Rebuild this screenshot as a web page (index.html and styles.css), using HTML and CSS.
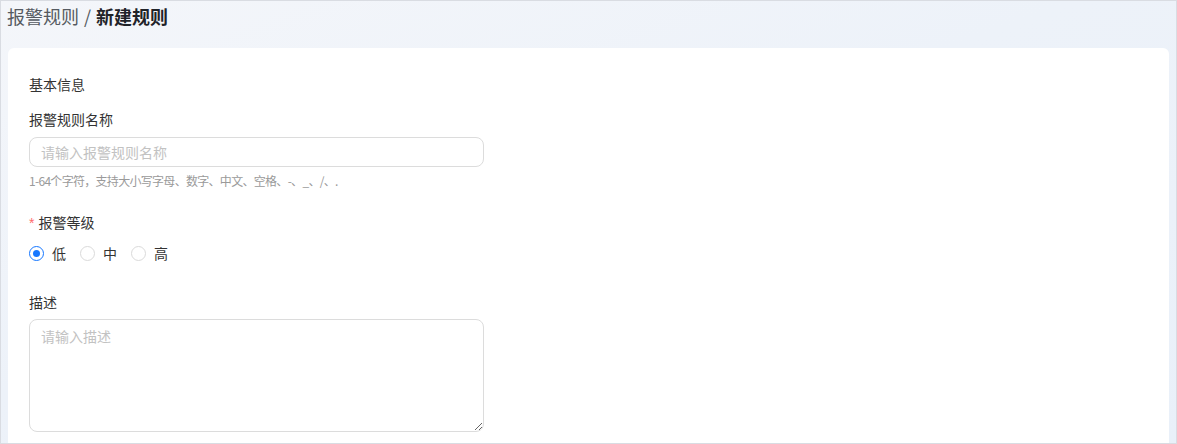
FILE: index.html
```html
<!DOCTYPE html>
<html lang="zh-CN">
<head>
<meta charset="utf-8">
<title>新建规则</title>
<link rel="stylesheet" href="styles.css">
</head>
<body>
<div class="frame">
  <header class="header"><span class="crumb">报警规则</span><span class="sep">/</span><span class="current">新建规则</span></header>
  <main class="card">
    <div class="section-title">基本信息</div>
    <div class="field">
      <label class="label">报警规则名称</label>
      <input class="input" type="text" placeholder="请输入报警规则名称">
      <div class="hint">1-64个字符，支持大小写字母、数字、中文、空格、-、_、/、.</div>
    </div>
    <div class="field field-level">
      <label class="label"><span class="req">*</span>报警等级</label>
      <div class="radios">
        <span class="radio"><span class="dot checked"></span><span class="radio-text">低</span></span>
        <span class="radio"><span class="dot"></span><span class="radio-text">中</span></span>
        <span class="radio"><span class="dot"></span><span class="radio-text">高</span></span>
      </div>
    </div>
    <div class="field field-desc">
      <label class="label">描述</label>
      <textarea class="textarea" placeholder="请输入描述"></textarea>
    </div>
  </main>
</div>
</body>
</html>
```
FILE: styles.css
```css
html, body {
  margin: 0;
  padding: 0;
}
body {
  font-family: "Noto Sans CJK SC", "Noto Sans", "Liberation Sans", sans-serif;
  color: #333;
}
.frame {
  width: 1177px;
  height: 444px;
  box-sizing: border-box;
  border: 1px solid #d9dce2;
  background: linear-gradient(160deg, #f4f6fa 0%, #edf2f9 45%, #e9f0f9 100%);
  overflow: hidden;
  display: flex;
  flex-direction: column;
}
.header {
  height: 47px;
  flex: none;
  padding-left: 6px;
  font-size: 18px;
  line-height: 31px;
  display: flex;
  align-items: flex-start;
}
.crumb, .sep {
  color: #555a61;
}
.sep {
  margin: 0 5px;
}
.current {
  color: #1f2329;
  font-weight: 700;
}
.card {
  flex: 1;
  margin: 0 7px 0 7px;
  background: #fff;
  border-radius: 6px 6px 0 0;
  padding: 25px 21px 0 21px;
}
.section-title {
  font-size: 14px;
  line-height: 22px;
  color: #333;
}
.field {
  display: flex;
  flex-direction: column;
  align-items: flex-start;
  margin-top: 13px;
}
.label {
  font-size: 14px;
  line-height: 22px;
  color: #333;
}
.req {
  color: #ff6b6b;
  margin-right: 4px;
  font-family: "Liberation Sans", sans-serif;
}
.input {
  margin-top: 7px;
  width: 455px;
  height: 30px;
  box-sizing: border-box;
  border: 1px solid #dcdcdc;
  border-radius: 8px;
  padding: 0 11px;
  font-family: inherit;
  font-size: 14px;
  color: #333;
  outline: none;
  background: #fff;
}
.input::placeholder, .textarea::placeholder {
  color: #c2c2c2;
}
.hint {
  margin-top: 4px;
  font-size: 12px;
  line-height: 20px;
  color: #9a9a9a;
  letter-spacing: -0.7px;
}
.field-level {
  margin-top: 20px;
}
.radios {
  display: flex;
  align-items: center;
  margin-top: 8px;
  height: 22px;
}
.radio {
  display: inline-flex;
  align-items: center;
  margin-right: 14px;
}
.dot {
  width: 15px;
  height: 15px;
  box-sizing: border-box;
  border: 1px solid #dadada;
  border-radius: 50%;
  background: #fff;
  position: relative;
}
.dot.checked {
  border-color: #1677ff;
}
.dot.checked::after {
  content: "";
  position: absolute;
  left: 3px;
  top: 3px;
  width: 7px;
  height: 7px;
  border-radius: 50%;
  background: #1677ff;
}
.radio-text {
  margin-left: 8px;
  font-size: 14px;
  line-height: 22px;
  color: #333;
}
.field-desc {
  margin-top: 27px;
}
.textarea {
  margin-top: 6px;
  width: 455px;
  height: 113px;
  box-sizing: border-box;
  border: 1px solid #dcdcdc;
  border-radius: 8px;
  padding: 5px 11px;
  font-family: inherit;
  font-size: 14px;
  line-height: 22px;
  color: #333;
  outline: none;
  resize: vertical;
  background: #fff;
}
```
